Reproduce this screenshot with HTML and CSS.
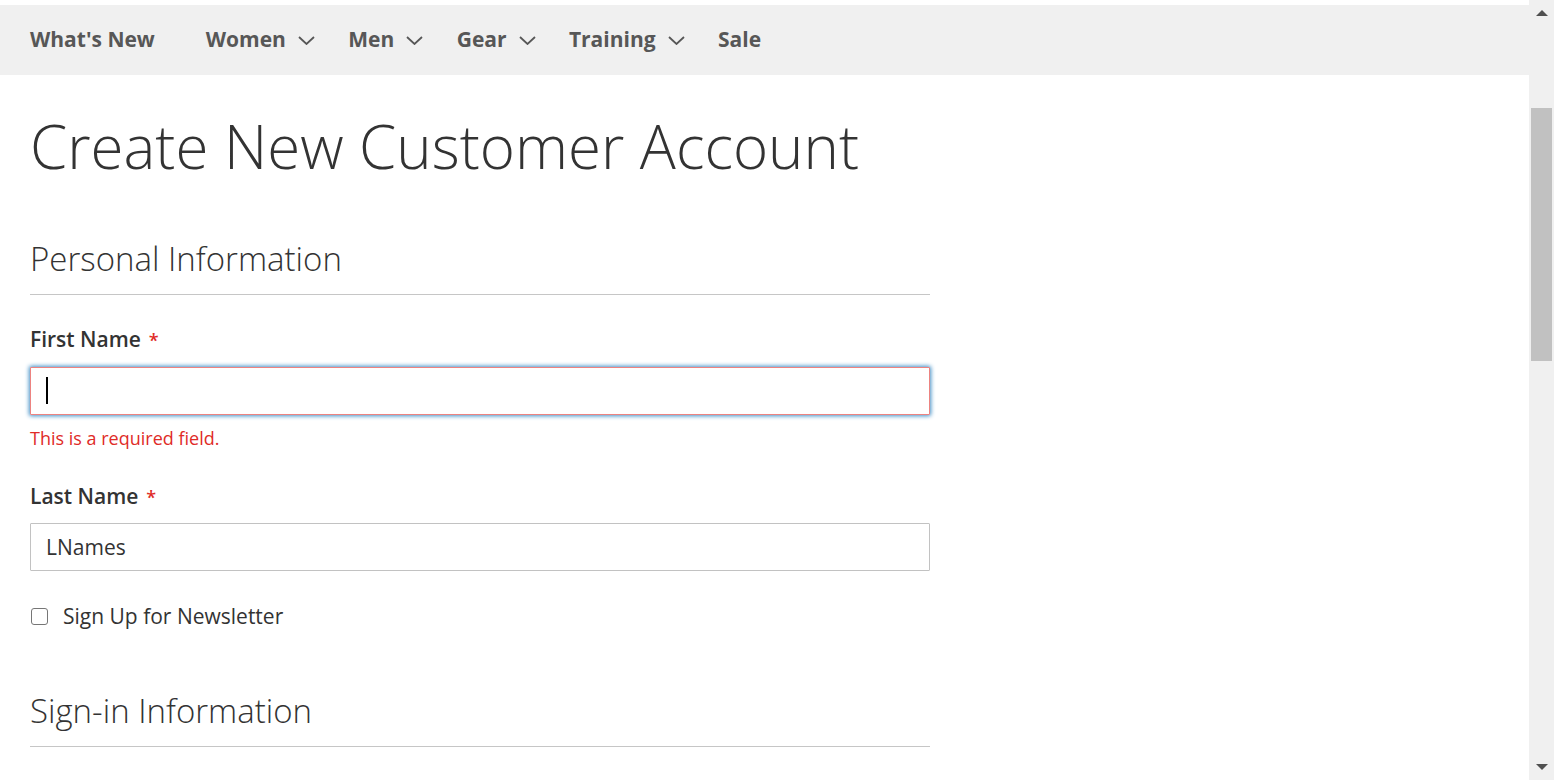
FILE: index.html
```html
<!DOCTYPE html>
<html lang="en">
<head>
<meta charset="utf-8">
<title>Create New Customer Account</title>
<link rel="stylesheet" href="styles.css">
</head>
<body>
<div class="page">
  <nav class="nav">
    <a class="nav-item nav-first">What's New</a>
    <a class="nav-item">Women <svg class="chev" viewBox="0 0 17 9" width="17" height="9"><path d="M1 1 L8.5 8 L16 1" fill="none" stroke="#575757" stroke-width="1.8"/></svg></a>
    <a class="nav-item">Men <svg class="chev" viewBox="0 0 17 9" width="17" height="9"><path d="M1 1 L8.5 8 L16 1" fill="none" stroke="#575757" stroke-width="1.8"/></svg></a>
    <a class="nav-item">Gear <svg class="chev" viewBox="0 0 17 9" width="17" height="9"><path d="M1 1 L8.5 8 L16 1" fill="none" stroke="#575757" stroke-width="1.8"/></svg></a>
    <a class="nav-item">Training <svg class="chev" viewBox="0 0 17 9" width="17" height="9"><path d="M1 1 L8.5 8 L16 1" fill="none" stroke="#575757" stroke-width="1.8"/></svg></a>
    <a class="nav-item">Sale</a>
  </nav>
  <main class="main">
    <h1 class="title">Create New Customer Account</h1>
    <form class="form">
      <fieldset class="fieldset">
        <legend class="legend">Personal Information</legend>
        <div class="field first-field">
          <label class="label">First Name<span class="req">*</span></label>
          <div class="control control-first">
            <input class="input input-error" type="text" value="">
            <span class="caret"></span>
          </div>
          <div class="error">This is a required field.</div>
        </div>
        <div class="field last-field">
          <label class="label">Last Name<span class="req">*</span></label>
          <div class="control control-last">
            <input class="input" type="text" value="LNames">
          </div>
        </div>
        <div class="check-row">
          <input class="checkbox" type="checkbox">
          <span class="check-label">Sign Up for Newsletter</span>
        </div>
      </fieldset>
      <fieldset class="fieldset signin">
        <legend class="legend">Sign-in Information</legend>
      </fieldset>
    </form>
  </main>
</div>
<div class="scrollbar">
  <span class="arrow-up"></span>
  <span class="thumb"></span>
  <span class="sb-spacer"></span>
  <span class="arrow-down"></span>
</div>
</body>
</html>
```
FILE: styles.css
```css
html, body {
  margin: 0;
  padding: 0;
  height: 780px;
  overflow: hidden;
  background: #fff;
}
body {
  display: flex;
  font-family: "Open Sans", "Liberation Sans", sans-serif;
  color: #333;
}
.page {
  flex: 1;
  padding-top: 5px;
  min-width: 0;
}
.nav {
  height: 70px;
  background: #f0f0f0;
  display: flex;
  align-items: center;
  padding-left: 30px;
  gap: 33.4px;
  box-sizing: border-box;
  padding-bottom: 2px;
}
.nav-item {
  font-size: 21px;
  font-weight: 700;
  color: #575757;
  display: flex;
  align-items: center;
  gap: 12px;
  line-height: 28px;
}
.nav-first {
  margin-right: 17.5px;
}
.chev {
  display: block;
  margin-top: 2px;
}
.main {
  padding-left: 30px;
}
.title {
  margin: 31px 0 0;
  font-size: 60px;
  font-weight: 300;
  line-height: 80px;
  color: #333;
}
.form {
  width: 900px;
}
.fieldset {
  border: 0;
  margin: 0;
  padding: 0;
}
.legend {
  display: block;
  width: 100%;
  padding: 0 0 15px;
  border-bottom: 1px solid #c6c6c6;
  font-size: 33px;
  font-weight: 300;
  line-height: 40px;
  color: #333;
}
.fieldset:first-child {
  margin-top: 53px;
}
.field {
  display: flex;
  flex-direction: column;
}
.first-field {
  margin-top: 32px;
}
.last-field {
  margin-top: 34px;
}
.label {
  font-size: 21px;
  font-weight: 600;
  line-height: 24px;
  color: #333;
}
.req {
  color: #e02b27;
  margin-left: 8px;
  font-size: 18px;
  font-weight: 600;
}
.control {
  position: relative;
}
.control-first {
  margin-top: 15px;
}
.control-last {
  margin-top: 14px;
}
.input {
  display: block;
  box-sizing: border-box;
  width: 900px;
  height: 48px;
  margin: 0;
  padding: 0 15px;
  border: 1px solid #c2c2c2;
  border-radius: 1px;
  font-family: "Open Sans", "Liberation Sans", sans-serif;
  font-size: 21px;
  color: #333;
  background: #fff;
  outline: none;
}
.input-error {
  border-color: #ed8380;
  box-shadow: 0 0 4px 1px #3f8ec6;
}
.caret {
  position: absolute;
  left: 16px;
  top: 10px;
  width: 2px;
  height: 27px;
  background: #000;
}
.error {
  margin-top: 11px;
  font-size: 18px;
  line-height: 24px;
  color: #e02b27;
}
.check-row {
  margin-top: 33px;
  display: flex;
  align-items: center;
  height: 24px;
}
.checkbox {
  appearance: none;
  -webkit-appearance: none;
  box-sizing: border-box;
  width: 17px;
  height: 17px;
  margin: 0 0 0 1px;
  border: 1.5px solid #767676;
  border-radius: 3px;
  background: #fff;
}
.check-label {
  margin-left: 15px;
  font-size: 21px;
  line-height: 24px;
  color: #333;
}
.signin {
  margin-top: 63px;
}
.scrollbar {
  width: 25px;
  flex: 0 0 25px;
  height: 780px;
  background: #f0f0f0;
  display: flex;
  flex-direction: column;
  align-items: center;
  padding-top: 10px;
  box-sizing: border-box;
}
.arrow-up {
  width: 0;
  height: 0;
  border-left: 6px solid transparent;
  border-right: 6px solid transparent;
  border-bottom: 6px solid #505050;
}
.thumb {
  margin-top: 92px;
  width: 21px;
  height: 253px;
  background: #c1c1c1;
}
.sb-spacer {
  flex: 1;
}
.arrow-down {
  width: 0;
  height: 0;
  border-left: 6px solid transparent;
  border-right: 6px solid transparent;
  border-top: 6px solid #505050;
  margin-bottom: 10px;
}
```
